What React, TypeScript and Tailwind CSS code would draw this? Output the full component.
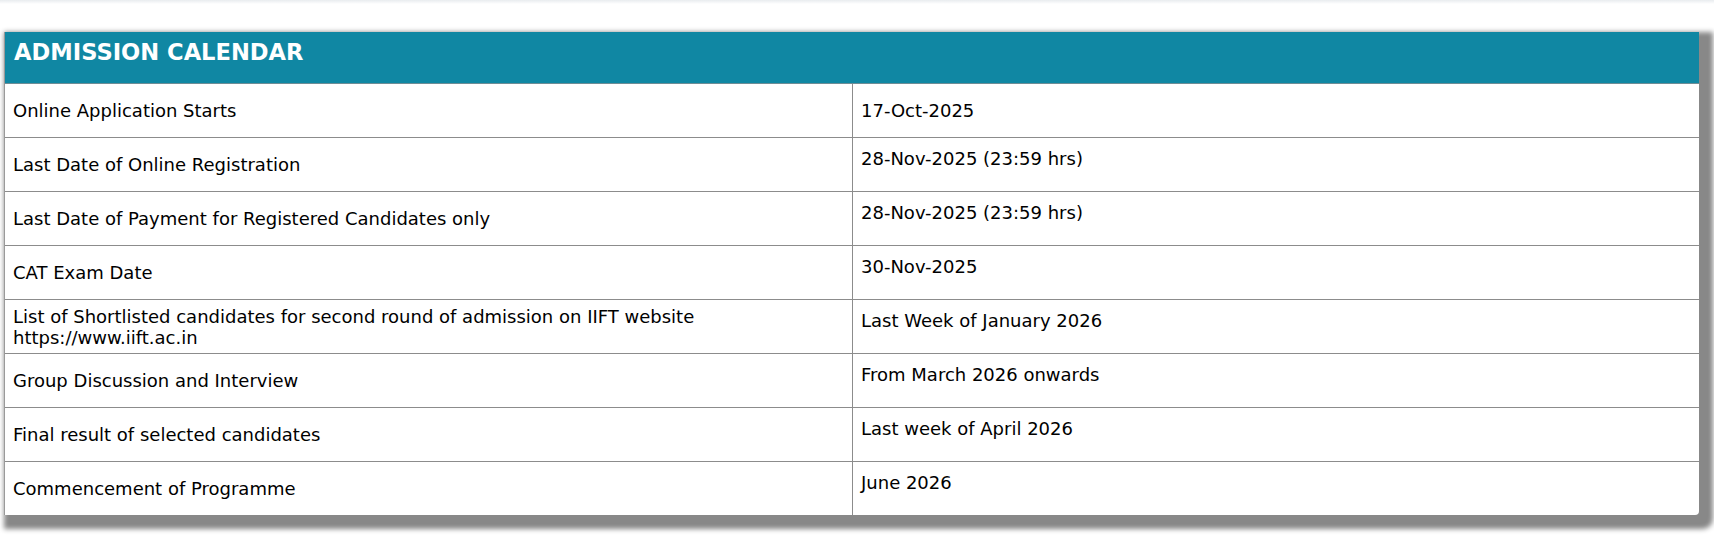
const ROWS: { label: string; date: string; center?: boolean }[] = [
  { label: "Online Application Starts", date: "17-Oct-2025", center: true },
  { label: "Last Date of Online Registration", date: "28-Nov-2025 (23:59 hrs)" },
  { label: "Last Date of Payment for Registered Candidates only", date: "28-Nov-2025 (23:59 hrs)" },
  { label: "CAT Exam Date", date: "30-Nov-2025" },
  {
    label: "List of Shortlisted candidates for second round of admission on IIFT website https://www.iift.ac.in",
    date: "Last Week of January 2026",
  },
  { label: "Group Discussion and Interview", date: "From March 2026 onwards" },
  { label: "Final result of selected candidates", date: "Last week of April 2026" },
  { label: "Commencement of Programme", date: "June 2026" },
];

export default function App() {
  return (
    <div
      className="h-[547px] w-full overflow-hidden bg-white text-black"
      style={{ fontFamily: '"DejaVu Sans", Verdana, sans-serif' }}
    >
      <div className="h-[4px] bg-gradient-to-b from-[#e9ecef] to-white" />
      <div className="ml-[4px] mr-[15px] mt-[28px] rounded-br-[4px] border-l border-[#9a9a9a] bg-white shadow-[7px_7px_5px_7px_#888]">
        <div className="h-[52px] border-b border-[#6f8d96] bg-[#1087a3] px-[9px] pt-[5px]">
          <h2 className="text-[22.6px] font-bold leading-[30px] text-white">ADMISSION CALENDAR</h2>
        </div>
        {ROWS.map((row, i) => (
          <div
            key={row.label}
            className={`grid grid-cols-2 ${i < ROWS.length - 1 ? "border-b border-[#8c8c8c]" : ""}`}
          >
            <div className="flex min-h-[53px] items-center px-[8px] py-[4px] text-[18px] leading-[21px]">
              <p className="max-w-[760px]">{row.label}</p>
            </div>
            <div
              className={`flex border-l border-[#8c8c8c] px-[8px] text-[18px] leading-[21px] ${
                row.center ? "items-center" : "items-start pt-[10px]"
              }`}
            >
              <p>{row.date}</p>
            </div>
          </div>
        ))}
      </div>
    </div>
  );
}
